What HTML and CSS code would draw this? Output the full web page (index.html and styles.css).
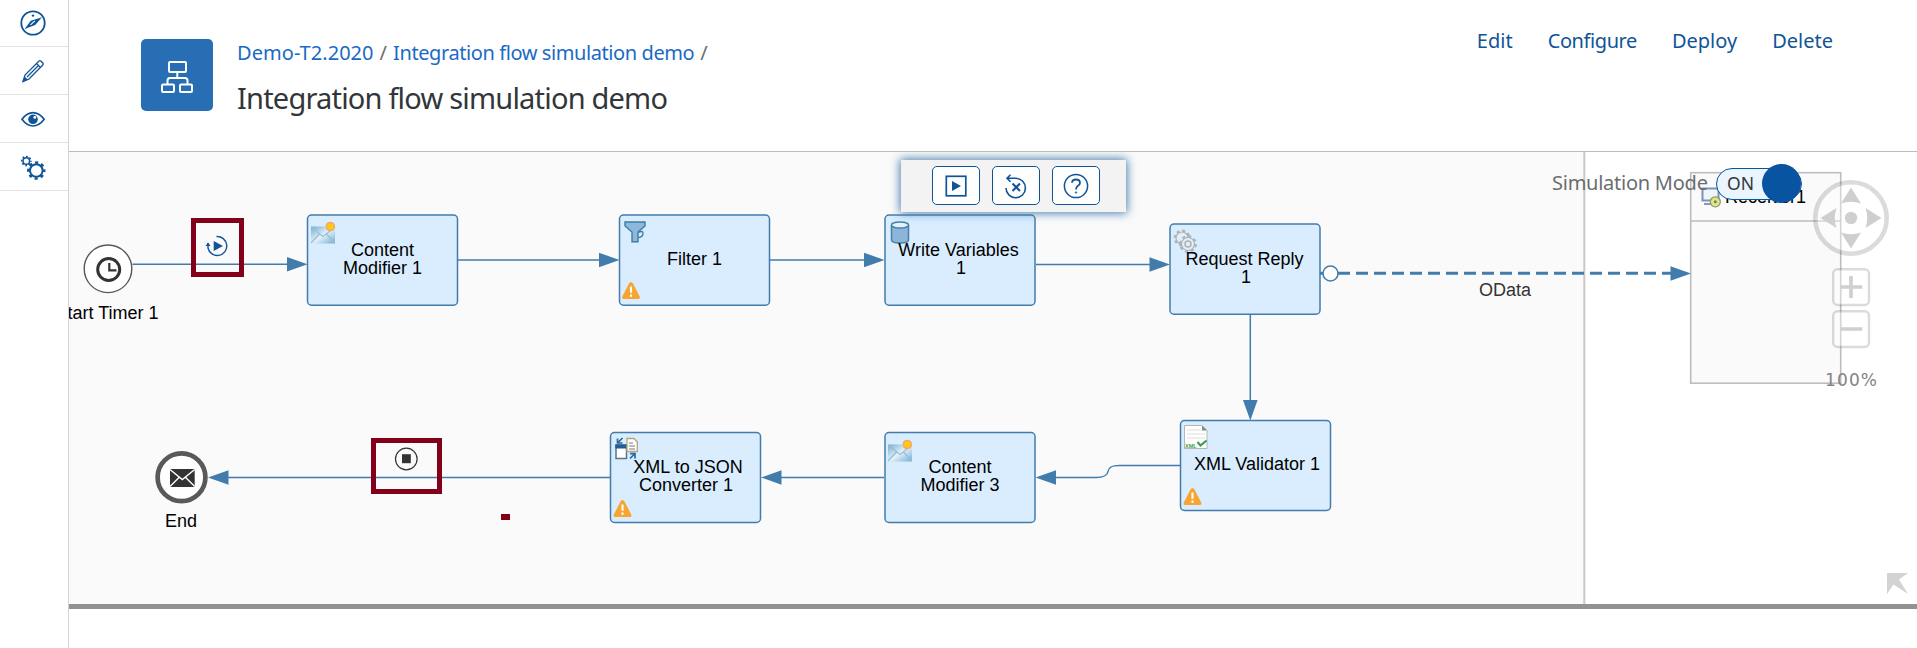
FILE: index.html
```html
<!DOCTYPE html>
<html lang="en">
<head>
<meta charset="utf-8">
<title>Integration flow simulation demo</title>
<link rel="stylesheet" href="styles.css">
</head>
<body>
<div class="app">
  <nav class="sidebar">
    <a class="side-item first"><svg width="26" height="26" viewBox="0 0 26 26"><circle cx="13" cy="13" r="11.7" fill="none" stroke="#0f5497" stroke-width="1.8"/><path d="M4.6 19L10.8 10.8L22 7.2L15.2 15Z" fill="#0f5497"/><path d="M10.5 14.9L14.8 10.9" stroke="#fff" stroke-width="1.1"/><circle cx="13" cy="5.6" r="1.2" fill="#0f5497"/></svg></a>
    <a class="side-item"><svg width="26" height="26" viewBox="0 0 26 26"><path d="M3 23.500L5 17L19 3Q20 2.300 21 3.200L23 5.200Q23.600 6.200 22.800 7L9 21Z M16.500 5.500L20.500 9.500 M7 19L18 8" fill="none" stroke="#0f5497" stroke-width="1.300"/><path d="M2.500 24L4.500 18.500L8 21.800Z" fill="#0f5497"/></svg></a>
    <a class="side-item"><svg width="26" height="26" viewBox="0 0 26 26"><path d="M2 13.300Q7 6.600 13 6.600T24.200 13.300Q19 20 13 20T2 13.300Z" fill="none" stroke="#0f5497" stroke-width="1.700"/><circle cx="13" cy="13.300" r="4.800" fill="#0f5497"/><circle cx="14.800" cy="11.400" r="1.400" fill="#fff"/></svg></a>
    <a class="side-item"><svg width="26" height="26" viewBox="0 0 26 26" fill="none" stroke="#0f5497"><circle cx="16.300" cy="16.500" r="6.300" stroke-width="2"/><circle cx="16.300" cy="16.500" r="8" stroke-width="2.400" stroke-dasharray="3.140 3.140" stroke-dashoffset="1.500"/><circle cx="6.300" cy="7" r="3.300" stroke-width="1.500"/><circle cx="6.300" cy="7" r="4.600" stroke-width="1.500" stroke-dasharray="1.806 1.806" stroke-dashoffset="0.900"/></svg></a>
  </nav>
  <main class="main">
    <header class="header">
      <div class="tile"><svg width="34" height="34" viewBox="0 0 34 34" fill="none" stroke="#fff" stroke-width="2"><rect x="9" y="2" width="17" height="10" rx="1"/><rect x="2" y="24.500" width="12" height="7.500" rx="1"/><rect x="20" y="24.500" width="12" height="7.500" rx="1"/><path d="M17.300 12V18M7.500 24V20.500Q7.500 18 10 18H25Q27.500 18 27.500 20.500V24"/></svg></div>
      <div class="titles">
        <div class="crumbs"><a class="crumb">Demo-T2.2020</a><span class="sep">/</span><a class="crumb narrow">Integration flow simulation demo</a><span class="sep">/</span></div>
        <h1 class="title">Integration flow simulation demo</h1>
      </div>
      <div class="actions"><a>Edit</a><a class="narrow">Configure</a><a>Deploy</a><a>Delete</a></div>
    </header>
    <section class="canvas">
      <svg class="diagram" width="1848" height="452" viewBox="69 152 1848 452">
        <defs>
          <linearGradient id="mail" x1="0" y1="0" x2="1" y2="1"><stop offset="0" stop-color="#72abd0"/><stop offset=".5" stop-color="#e3f2fb"/><stop offset="1" stop-color="#70add2"/></linearGradient>
          <g id="envelope"><rect width="24" height="17" y="5" fill="url(#mail)"/><path d="M0 5.500L12 15L24 5.500M0 21.500L8.500 12.500M24 21.500L15.500 12.500" fill="none" stroke="#9bbdd3" stroke-width="1.200"/><circle cx="19.300" cy="5" r="4.800" fill="#f7a76b"/><circle cx="19.300" cy="5" r="3" fill="#ffd000"/></g>
          <g id="warn"><path d="M7 1.500Q9 -1.500 11 1.500L17.700 14.500Q18.500 17 16.300 17H1.700Q-.5 17 .3 14.500Z" fill="#f7a530"/><path d="M9 4.500V10.800M9 12.500V14.700" stroke="#fff" stroke-width="2.100"/></g>
          <path id="head" d="M0 0L-20.500 -7.300V7.300Z" fill="#427cac"/>
        </defs>
        <rect x="69" y="152" width="1515" height="452" fill="#fafafa"/>
        <path d="M1584.300 152V604" stroke="#c9c9c9" stroke-width="2"/>
        <g class="receiver"><rect x="1690.700" y="172.700" width="150" height="210.500"/><path d="M1690.700 221H1840.700"/></g>
        <g class="flow">
          <path d="M132.500 264.300H290M458 260H600M770 260H866M1036 264.500H1150M1250.300 315V402M1180 465.500H1119C1111 465.500 1108.500 467.500 1108 471.500C1107.500 475.500 1103 477.500 1096 477.500H1055M884 477.500H780M610 477.500H227"/>
        </g>
        <path d="M1338 273.300H1671" stroke="#427cac" stroke-width="3" stroke-dasharray="12 6"/>
        <use href="#head" x="307.500" y="264.300"/><use href="#head" x="619.500" y="260"/><use href="#head" x="884.500" y="260"/><use href="#head" x="1170" y="264.500"/><use href="#head" x="1691" y="273.500"/>
        <use href="#head" transform="translate(1250.300 420.500) rotate(90)"/><use href="#head" transform="translate(1035.500 477.500) rotate(180)"/><use href="#head" transform="translate(761 477.500) rotate(180)"/><use href="#head" transform="translate(208 477.500) rotate(180)"/>

        <g class="node">
          <rect x="307.500" y="215" width="150" height="90.200" rx="4"/><rect x="619.500" y="215" width="150" height="90.200" rx="4"/><rect x="885" y="215" width="150" height="90.200" rx="4"/><rect x="1170" y="224" width="150" height="90.200" rx="4"/><rect x="1180.500" y="420.500" width="150" height="90" rx="4"/><rect x="885" y="432.500" width="150" height="90" rx="4"/><rect x="610.500" y="432.500" width="150" height="90" rx="4"/>
        </g>
        <path d="M1320 273.300H1323" stroke="#427cac" stroke-width="3"/>
        <circle cx="1330.500" cy="273.500" r="7.500" fill="#fff" stroke="#427cac" stroke-width="1.500"/>

        <use href="#envelope" x="311" y="221.500"/>
        <use href="#envelope" x="888" y="439.500"/>
        <use href="#warn" x="622" y="282"/><use href="#warn" x="613.500" y="500"/><use href="#warn" x="1183.500" y="488"/>
        <g fill="#8db8d9" stroke="#3d7da3" stroke-width="1.400"><path d="M625 222H645V226L638 232V241.700H632V232L625 226Z"/><path d="M638.500 232.500Q643 230 643 233.500T638.500 237.500" fill="none"/></g>
        <g fill="#8db5d9" stroke="#4683a7" stroke-width="1.500"><path d="M891.500 225V240Q891.500 243 900 243T908.500 240V225"/><ellipse cx="900" cy="225" rx="8.500" ry="3" fill="#e5f2fb"/></g>
        <g fill="#e5eef4" stroke="#a9b3ba"><circle cx="1182" cy="238" r="6" stroke-width="1.200"/><circle cx="1182" cy="238" r="7.300" fill="none" stroke-width="2.200" stroke-dasharray="2.870 2.870"/><circle cx="1188" cy="244" r="6.500" stroke-width="1.200"/><circle cx="1188" cy="244" r="7.800" fill="none" stroke-width="2.200" stroke-dasharray="3.060 3.060"/><circle cx="1188" cy="244" r="3" stroke-width="1.500"/></g>
        <g><path d="M1184.500 425.500H1202L1207 430.500V448.500H1184.500Z" fill="#fff" stroke="#b5b5b5"/><path d="M1202 425.500V430.500H1207Z" fill="#888"/><path d="M1187 430H1201M1187 434H1205M1187 438H1205" stroke="#ddd"/><path d="M1197.500 442L1200.500 445.500L1206.500 440.500" fill="none" stroke="#3d9d4a" stroke-width="2.200"/><text class="xml" x="1185" y="448">XML</text></g>
        <g><rect x="616" y="445" width="10.500" height="13.500" fill="#fff" stroke="#597589" stroke-width="1.500"/><path d="M615.300 446.500H627.300" stroke="#265d91" stroke-width="4"/><path d="M627 438.500H634L637.300 442V451.500H627Z" fill="#fff" stroke="#b3a47c" stroke-width="1.300"/><path d="M629 443H633M629 446H635M629 449H635" stroke="#777"/><path d="M622.500 438L618 442.500M617.500 438.500V443H622.500M630 458.500L634.500 454M630 453.700H635V458.500" fill="none" stroke="#216ba7" stroke-width="1.700"/></g>
        <g><rect x="1702.500" y="188.500" width="16" height="12" fill="#f0f5fa" stroke="#7893b8" stroke-width="2"/><path d="M1704 204H1711" stroke="#829ab8" stroke-width="2"/><circle cx="1715.300" cy="201.800" r="5" fill="#e1e77f" stroke="#8e9871" stroke-width="1.300"/><circle cx="1715.300" cy="201.800" r="1.500" fill="#777"/></g>

        <g class="label">
          <text x="382.500" y="255.700">Content</text><text x="382.500" y="273.700">Modifier 1</text>
          <text x="694.500" y="265">Filter 1</text>
          <text x="958.500" y="255.700">Write Variables</text><text x="961" y="273.700">1</text>
          <text x="1244.500" y="265">Request Reply</text><text x="1246" y="283">1</text>
          <text x="1257" y="470">XML Validator 1</text>
          <text x="960" y="473.300">Content</text><text x="960" y="491">Modifier 3</text>
          <text x="688" y="473.300">XML to JSON</text><text x="686" y="491">Converter 1</text>
          <text x="107" y="318.700">Start Timer 1</text><text x="181" y="526.700">End</text>
          <text class="soft" x="1505" y="296">OData</text>
          <text x="1765.500" y="202.700">Receiver1</text>
        </g>

        <circle cx="108" cy="268.800" r="23.800" fill="#fff" stroke="#595959" stroke-width="1.400"/>
        <circle cx="108.700" cy="269.500" r="11" fill="none" stroke="#333" stroke-width="3"/><path d="M109.300 263V270.300H116.500" fill="none" stroke="#333" stroke-width="2.200"/>
        <circle cx="181.500" cy="477.300" r="23.900" fill="#fff" stroke="#595959" stroke-width="4.700"/>
        <rect x="170" y="469" width="24.700" height="18" fill="#333"/><path d="M170 469.500L182.300 479.500L194.700 469.500M170 486.500L179 477.500M194.700 486.500L185.700 477.500" fill="none" stroke="#fff" stroke-width="1.400"/>

        <path d="M216.500 236.500A9.500 9.500 0 1 1 208 248V243" fill="none" stroke="#0f5497" stroke-width="1.400"/><path d="M205.500 246L208 242.500L210.500 246Z" fill="#0f5497"/><path d="M213.700 241L223 246L213.700 251Z" fill="#0f5497"/>
        <circle cx="406.300" cy="459" r="10.800" fill="none" stroke="#333" stroke-width="1.200"/><rect x="402" y="454.200" width="8.800" height="9" fill="#333"/>
        <g class="mark"><rect x="193.500" y="220.500" width="48" height="54"/><rect x="373.500" y="440.500" width="66" height="51"/></g>
        <rect x="501" y="514" width="9" height="6" fill="#820019"/>
      </svg>

      <div class="toolbar">
        <button class="tool"><svg width="26" height="26" viewBox="0 0 26 26"><rect x="3.300" y="3.300" width="19.500" height="19.500" fill="none" stroke="#0f5497" stroke-width="1.700"/><path d="M9 8L18 13L9 18Z" fill="#0f5497"/></svg></button>
        <button class="tool"><svg width="26" height="26" viewBox="0 0 26 26" fill="none" stroke="#0f5497" stroke-width="1.600"><path d="M4 5.300H13A9.700 9.700 0 1 1 3 15M7.500 1.800L4 5.300L7.500 8.800"/><path d="M9.500 10.500L17 18M17 10.500L9.500 18" stroke-width="2"/></svg></button>
        <button class="tool"><svg width="26" height="26" viewBox="0 0 26 26" fill="none" stroke="#0f5497"><circle cx="13" cy="13" r="11.600" stroke-width="1.500"/><path d="M9 9.800Q9.200 6.500 13 6.500T17 9.800Q17 11.500 15 12.800T13 16.500" stroke-width="1.800"/><circle cx="13" cy="19.500" r=".7"/></svg></button>
      </div>

      <div class="simulation"><span class="sim-label">Simulation Mode</span><div class="switch"><span class="on">ON</span><span class="knob"></span></div></div>

      <svg class="zoomer" width="80" height="220" viewBox="1811 178 80 220">
        <circle cx="1851" cy="218" r="35.700" fill="#fff" fill-opacity=".35" stroke="#000" stroke-opacity=".14" stroke-width="4.600"/>
        <g fill="#cfcfcf"><circle cx="1851" cy="218" r="6.200"/><path d="M1851 187.500L1861 203.500Q1851 200 1841 203.500ZM1851 248.500L1861 232.500Q1851 236 1841 232.500ZM1820.500 218L1836.500 208Q1833 218 1836.500 228ZM1881.500 218L1865.500 208Q1869 218 1865.500 228Z"/></g>
        <g fill="#fff" fill-opacity=".35" stroke="#000" stroke-opacity=".14" stroke-width="2.400"><rect x="1833.200" y="269.200" width="35.800" height="35.800" rx="4.500"/><rect x="1833.200" y="311.200" width="35.800" height="35.800" rx="4.500"/></g>
        <path d="M1840 287H1862.300M1851 276V298M1840 329H1862.300" stroke="#d0d0d0" stroke-width="3.700"/>
        <text class="percent" x="1825" y="386" textLength="52">100%</text>
      </svg>
      <svg class="corner" width="21" height="21" viewBox="0 0 21 21"><path d="M0 0H21L12 6.500L21 21L6.500 11.500L0 21Z" fill="#d3d3d3"/></svg>
    </section>
    <div class="splitter"></div>
  </main>
</div>
</body>
</html>
```
FILE: styles.css
```css
* { box-sizing: border-box; }
body { margin: 0; background: #fff; font-family: "Noto Sans", sans-serif; font-size: 20px; overflow: hidden; }
.app { display: flex; height: 648px; }
.sidebar { flex: 0 0 69px; border-right: 1px solid #d4d4d4; }
.side-item { display: flex; align-items: center; justify-content: center; height: 48px; padding-right: 2px; border-bottom: 1px solid #e2e2e2; }
.side-item.first { height: 47px; }
.main { flex: 1; min-width: 0; }
.header { display: flex; height: 152px; border-bottom: 1px solid #bcbcbc; padding: 39px 84px 0 72px; }
.tile { display: flex; align-items: center; justify-content: center; width: 72px; height: 72px; padding-top: 3px; border-radius: 5px; background: #286eb4; }
.titles { margin-left: 24px; }
.crumbs { display: flex; height: 28px; line-height: 28px; white-space: nowrap; }
.crumb { color: #1b6ac6; letter-spacing: 0.05px; }
.narrow, .crumb.narrow { letter-spacing: -0.41px; }
.sep { color: #6a6d70; margin: 0 6px; }
.title { margin: 10px 0 0; font-size: 29px; font-weight: 400; line-height: 42px; letter-spacing: -0.8px; color: #32363a; white-space: nowrap; }
.actions { display: flex; gap: 35px; margin-left: auto; margin-top: -12px; height: 28px; line-height: 28px; color: #0f5497; }
.canvas { position: relative; height: 452px; overflow: hidden; }
.diagram { display: block; }
.flow path { fill: none; stroke: #427cac; stroke-width: 1.500px; }
.node rect { fill: #d9edfe; stroke: #427cac; stroke-width: 1.500px; }
.receiver { fill: #fafafa; stroke: #bdbdbd; stroke-width: 1.600px; }
.mark { fill: none; stroke: #820019; stroke-width: 5px; }
.label { font-family: "Liberation Sans", Arial, sans-serif; font-size: 18px; text-anchor: middle; fill: #000; }
.label .soft { fill: #333; }
.xml { font: bold 5.500px "Liberation Sans", sans-serif; fill: #3d9d4a; }
.toolbar { position: absolute; left: 832px; top: 8px; width: 225px; height: 52px; display: flex; gap: 12px; padding: 6px 0 0 31px; background: #f3f3f3; box-shadow: 0 0 9px 1px #427cac; }
.tool { display: flex; align-items: center; justify-content: center; width: 48px; height: 39px; padding: 0; border: 1px solid #0f5497; border-radius: 5px; background: #fff; }
.simulation { position: absolute; left: 1483px; top: 12px; height: 39px; display: flex; align-items: center; color: #6a6d70; }
.sim-label { width: 164px; margin-top: -2px; white-space: nowrap; line-height: 28px; letter-spacing: -0.25px; }
.switch { display: flex; align-items: center; justify-content: space-between; width: 86px; height: 32px; padding-left: 10px; border: 1px solid #0854a0; border-radius: 16px; background: #ebf5fe; }
.on { margin-top: -2px; font-size: 17.500px; line-height: 24px; color: #32363a; }
.knob { flex: 0 0 39px; height: 39px; border-radius: 50%; background: #0854a0; }
.zoomer { position: absolute; left: 1742px; top: 26px; }
.percent { font: 17px "DejaVu Sans", sans-serif; fill: #838383; }
.corner { position: absolute; left: 1818px; top: 421px; }
.splitter { height: 5px; background: #929292; }
```
